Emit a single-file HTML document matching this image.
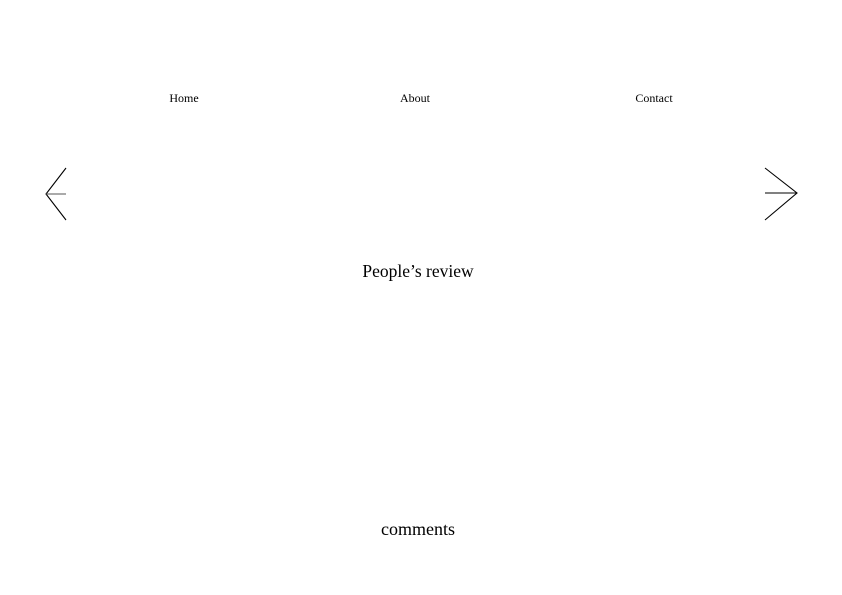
<!DOCTYPE html>
<html><head><style>
body{margin:0;width:842px;height:595px;background:#fff;font-family:"Liberation Serif",serif;color:#000;position:relative;overflow:hidden}
.t{position:absolute;white-space:nowrap;transform:translateX(-50%)}
</style></head><body>
<div class="t" style="left:184px;top:91px;font-size:12px">Home</div>
<div class="t" style="left:415px;top:91px;font-size:12px">About</div>
<div class="t" style="left:654px;top:91px;font-size:12px">Contact</div>
<svg width="842" height="595" style="position:absolute;left:0;top:0">
<g stroke="#000" stroke-width="1.1" fill="none">
<polyline points="66,168 46,194 66,220"/><line x1="46" y1="194" x2="66" y2="194" stroke="#555"/>
<polyline points="765,168 797,193 765,220"/><line x1="765" y1="193" x2="797" y2="193"/>
</g></svg>
<div class="t" style="left:418px;top:261px;font-size:17.5px">People’s review</div>
<div class="t" style="left:418px;top:519px;font-size:18px">comments</div>
</body></html>
